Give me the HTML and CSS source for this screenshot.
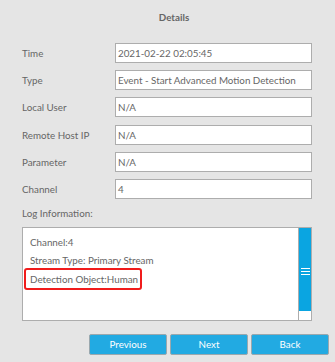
FILE: index.html
```html
<!DOCTYPE html>
<html lang="en">
<head>
    <meta charset="UTF-8">
    <title>Details</title>
    <link rel="stylesheet" href="styles.css">
</head>
<body>
    <div class="dialog">
        <h1 class="title">Details</h1>

        <div class="fields">
            <div class="row">
                <label>Time</label>
                <div class="field">2021-02-22 02:05:45</div>
            </div>
            <div class="row">
                <label>Type</label>
                <div class="field">Event - Start Advanced Motion Detection</div>
            </div>
            <div class="row">
                <label>Local User</label>
                <div class="field">N/A</div>
            </div>
            <div class="row">
                <label>Remote Host IP</label>
                <div class="field">N/A</div>
            </div>
            <div class="row">
                <label>Parameter</label>
                <div class="field">N/A</div>
            </div>
            <div class="row">
                <label>Channel</label>
                <div class="field">4</div>
            </div>
        </div>

        <div class="log-label">Log Information:</div>
        <div class="log-box">
            <div class="log-lines">
                <div class="log-line">Channel:4</div>
                <div class="log-line">Stream Type: Primary Stream</div>
                <div class="log-line highlight">Detection Object:Human</div>
            </div>
            <div class="scrollbar">
                <div class="thumb">
                    <span class="grip"></span>
                </div>
            </div>
        </div>

        <div class="buttons">
            <button class="btn">Previous</button>
            <button class="btn">Next</button>
            <button class="btn">Back</button>
        </div>
    </div>
</body>
</html>
```

FILE: styles.css
```css
body {
    margin: 0;
    background-color: #e5e5e5;
    font-family: Lato, 'Noto Sans', sans-serif;
    font-size: 9.8px;
    color: #666;
}

.dialog {
    width: 335px;
    height: 362px;
    padding: 10px 23px 0 22px;
    box-sizing: border-box;
}

.title {
    margin: 0;
    text-align: center;
    font-size: 9.8px;
    font-weight: bold;
    color: #666;
    line-height: 15px;
    padding-left: 14px;
}

/* Pola formularza */
.fields {
    margin-top: 18px;
    display: flex;
    flex-direction: column;
    gap: 7.2px;
}

.row {
    display: flex;
    align-items: center;
}

.row label {
    width: 93px;
}

.field {
    flex: 1;
    height: 20px;
    box-sizing: border-box;
    border: 1px solid #adadad;
    background-color: #fff;
    padding: 0 0 0 2px;
    line-height: 18px;
    white-space: nowrap;
    overflow: hidden;
}

.log-label {
    margin-top: 7px;
    line-height: 15px;
}

/* Okno z logiem */
.log-box {
    margin-top: 6px;
    height: 94px;
    box-sizing: border-box;
    border: 1px solid #adadad;
    background-color: #fff;
    display: flex;
}

.log-lines {
    flex: 1;
    padding: 5px 0 0 2px;
}

.log-line {
    line-height: 18px;
    padding-left: 5px;
    display: table;
}

.highlight {
    border: 2px solid #f01c1c;
    border-radius: 3px;
    padding: 0 2px 0 4px;
    margin: -1px 0 0 -1px;
}

.scrollbar {
    width: 12px;
    border-left: 1px solid #adadad;
    background-color: #fff;
}

.thumb {
    height: 83px;
    background-color: #0aa5e1;
    display: flex;
    align-items: center;
    justify-content: center;
}

.grip {
    width: 9px;
    height: 9px;
    background: repeating-linear-gradient(#fff 0 1.5px, transparent 1.5px 3px);
    margin-top: 6px;
}

/* Przyciski */
.buttons {
    margin-top: 13px;
    display: flex;
    justify-content: flex-end;
    gap: 3px;
    margin-right: -17px;
}

.buttons .btn {
    width: 78px;
    height: 21px;
    border: 1px solid #9aa8ae;
    border-radius: 2px;
    background-color: #22aae2;
    color: #fff;
    font-family: Lato, 'Noto Sans', sans-serif;
    font-size: 9.8px;
    padding: 0;
    cursor: pointer;
}
```
